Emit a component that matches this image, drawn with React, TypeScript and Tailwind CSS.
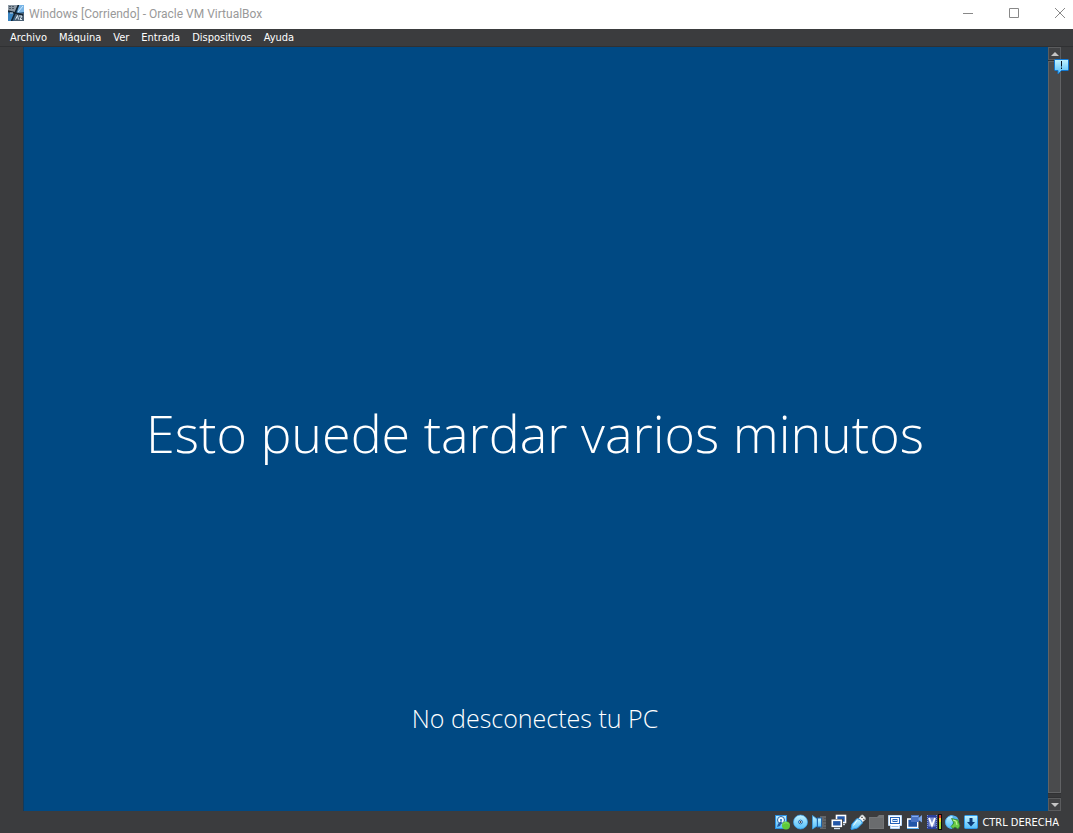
import type { ReactNode } from "react";

const menus = [
  { label: "Archivo" },
  { label: "Máquina" },
  { label: "Ver" },
  { label: "Entrada" },
  { label: "Dispositivos" },
  { label: "Ayuda" },
];

function Icon({ children }: { children: ReactNode }) {
  return (
    <svg viewBox="0 0 16 16" className="block size-4" aria-hidden="true">
      {children}
    </svg>
  );
}

function AppIcon() {
  return (
    <Icon>
      <rect width="16" height="16" fill="#275c8a" />
      <path d="M0 0h10L7 7 0 6z" fill="#8d9aa6" />
      <path d="M1 1.5h6M1 3.5h5" stroke="#4a5764" strokeDasharray="2 1" />
      <path d="M11 0h5v7l-7 1z" fill="#79b5e6" />
      <path d="M0 8l6 1-3 7H0z" fill="#3a84c0" />
      <path d="M7 9l9-1v8H6z" fill="#4b6074" />
      <path d="M10.5 0L3.5 16M0 6l15 4" stroke="#13222f" strokeWidth="1.5" />
      <path d="M7.5 14.5l2-4 1 4M11 11h3l-2 3.5h2" stroke="#d8e9f5" fill="none" />
      <path d="M15 1l-5 6M2 8l3 0" stroke="#cfeaff" />
    </Icon>
  );
}

function BlueGradient({ id }: { id: string }) {
  return (
    <linearGradient id={id} x1="0" y1="0" x2="0" y2="1">
      <stop offset="0" stopColor="#c4f3ff" />
      <stop offset="1" stopColor="#52bdfa" />
    </linearGradient>
  );
}

const devices = [
  {
    name: "Discos duros",
    icon: (
      <Icon>
        <defs><BlueGradient id="disk" /></defs>
        <rect x="1.5" y="1.5" width="11" height="13" fill="url(#disk)" stroke="#2b8fe2" />
        <circle cx="7" cy="6" r="3.5" fill="#f0fcff" stroke="#2a62a8" />
        <circle cx="7" cy="6" r="1" fill="#0867c5" />
        <path d="M3 13l1-3 3-3 1 1-2 4z" fill="#2558a0" />
        <circle cx="12" cy="11.5" r="4" fill="#5fc93a" />
        <path d="M9 10.5a3.4 3.4 0 016 0" fill="none" stroke="#86e05c" />
      </Icon>
    ),
  },
  {
    name: "Unidades ópticas",
    icon: (
      <Icon>
        <defs><BlueGradient id="disc" /></defs>
        <circle cx="7.5" cy="8" r="7" fill="url(#disc)" stroke="#3aa2f0" strokeWidth="0.7" />
        <circle cx="7.5" cy="8" r="1.9" fill="#fff" stroke="#1b6bb8" />
        <circle cx="7.5" cy="8" r="0.9" fill="#3b3c3e" />
      </Icon>
    ),
  },
  {
    name: "Audio",
    icon: (
      <Icon>
        <defs><BlueGradient id="audio" /></defs>
        <path d="M8 2h6v13H8z" fill="#636568" />
        <path d="M12 4.5h2M11 7.5h3M12 10.5h2M11 13.5h3" stroke="#515356" />
        <path d="M.5 1.5L5 5v7L.5 15z" fill="url(#audio)" stroke="#3b9fea" strokeWidth="0.8" />
        <rect x="5.5" y="4" width="4" height="9" fill="url(#audio)" stroke="#1f65ad" />
      </Icon>
    ),
  },
  {
    name: "Red",
    icon: (
      <Icon>
        <rect x="5.5" y="1.5" width="9" height="7" fill="#2357a8" stroke="#fff" strokeWidth="1.6" />
        <path d="M9 10.5h5" stroke="#c3d2e2" strokeWidth="1.4" />
        <rect x="0" y="5" width="12" height="10" fill="#3b3c3e" />
        <rect x="1.3" y="6.3" width="9" height="6" fill="#2357a8" stroke="#fff" strokeWidth="1.6" />
        <path d="M3 14.5h6" stroke="#d4e3f2" strokeWidth="1.4" />
      </Icon>
    ),
  },
  {
    name: "USB",
    icon: (
      <Icon>
        <defs><BlueGradient id="usb" /></defs>
        <path d="M8.5 4.5l3-3.5h1.5l2.5 3v1.5l-3 2.5z" fill="#f5f7f7" stroke="#a1a8ab" strokeWidth="0.7" />
        <path d="M11.4 3.4h1.2M13.4 5.4h1" stroke="#222" strokeWidth="1.2" />
        <path d="M7 4.5q4.500 .5 5.500 4.500l-5 5-6 1.500-.5-.5 1-5z" fill="url(#usb)" stroke="#2a98ec" />
        <path d="M3.500 11.500L7 6.500" stroke="#ecfdff" />
      </Icon>
    ),
  },
  {
    name: "Carpetas compartidas",
    icon: (
      <Icon>
        <path d="M0 3h8l2-2h5v14H0z" fill="#737577" />
        <path d="M1 4h13v10H1z" fill="#6a6c6e" />
      </Icon>
    ),
  },
  {
    name: "Pantalla",
    icon: (
      <Icon>
        <path d="M.5 1.5h13v10h-2v3h-9v-3h-2z" fill="#fff" stroke="#b9d8f8" />
        <rect x="2.500" y="3.500" width="9" height="6" fill="#fff" stroke="#2462b8" />
        <rect x="5" y="5.500" width="4" height="2" fill="#c5e4ff" stroke="#2462b8" />
        <path d="M3.500 12.500h7" stroke="#9cc4ee" />
      </Icon>
    ),
  },
  {
    name: "Grabación",
    icon: (
      <Icon>
        <path d="M.7 5h10v8.500h-10z" fill="#2357a8" stroke="#fff" strokeWidth="1.4" />
        <path d="M0 14.500h12" stroke="#62b7f5" />
        <rect x="4" y="1" width="8" height="7" fill="#4a74c4" />
        <path d="M11.500 4L15 1v7.500L11.500 6z" fill="#7ba4e4" />
        <path d="M5 2.500h6" stroke="#86aeea" />
      </Icon>
    ),
  },
  {
    name: "Virtualización",
    icon: (
      <Icon>
        <rect x="1" y="1" width="10" height="14" fill="#2a409c" />
        <path d="M1.500 1v14M10.500 1v14" stroke="#7d90d4" strokeDasharray="1 1" />
        <path d="M2.500 3.500h7v9h-7z" fill="#8494d2" />
        <path d="M3 4l3 7.500L9 4" stroke="#fff" strokeWidth="1.800" fill="none" />
        <rect x="12" y="0" width="4" height="16" fill="#0c0c0c" />
        <path d="M14 1v3" stroke="#e43b28" strokeWidth="2" />
        <path d="M14 4v4" stroke="#f4cf28" strokeWidth="2" />
        <path d="M14 8v7" stroke="#a2dc31" strokeWidth="2" />
      </Icon>
    ),
  },
  {
    name: "Integración del ratón",
    icon: (
      <Icon>
        <defs><BlueGradient id="mouse" /></defs>
        <path d="M6 1.500q3-.5 3 2.500L7 14.500Q.5 14 .5 8q0-5 5.500-6.500z" fill="url(#mouse)" stroke="#4aaaf0" />
        <path d="M8 1.500q5 0 6 6l-3 1-4-3z" fill="#55b4f2" />
        <path d="M6.500 4.500L13 6l2 6-2 3-3-2-2 1.500-2-2 3-3.500z" fill="#6bcb48" stroke="#2d8534" strokeWidth="0.800" />
        <path d="M8 6l3 1 1 4" fill="none" stroke="#c5f59c" />
      </Icon>
    ),
  },
  {
    name: "Captura de teclado",
    icon: (
      <Icon>
        <defs><BlueGradient id="key" /></defs>
        <rect x=".5" y="1.500" width="13" height="13" rx="1" fill="url(#key)" stroke="#2d9bed" />
        <path d="M5.500 4h3v4H11l-4 4.500L3 8h2.500z" fill="#0b3a78" />
      </Icon>
    ),
  },
];

export default function App() {
  return (
    <div className="flex min-h-screen flex-col bg-[#3b3c3e] font-['Open_Sans',sans-serif]">
      <header className="flex h-[29px] shrink-0 items-center bg-white pb-[3px] pl-2">
        <AppIcon />
        <h1 className="ml-[5px] pt-px font-['Roboto',sans-serif] text-[12px] leading-4 text-[#999]">
          Windows [Corriendo] - Oracle VM VirtualBox
        </h1>
        <div className="ml-auto flex gap-5 text-[#888]">
          <button aria-label="Minimizar" className="flex h-6 w-[26px] items-center justify-center">
            <svg viewBox="0 0 12 12" className="size-3" fill="none" stroke="currentColor"><path d="M1 6.5h10" /></svg>
          </button>
          <button aria-label="Maximizar" className="flex h-6 w-[26px] items-center justify-center">
            <svg viewBox="0 0 12 12" className="size-3" fill="none" stroke="currentColor"><path d="M1.5 1.5h9v9h-9z" /></svg>
          </button>
          <button aria-label="Cerrar" className="flex h-6 w-[26px] items-center justify-center">
            <svg viewBox="0 0 12 12" className="size-3" fill="none" stroke="currentColor"><path d="M1 1l10 10M11 1L1 11" /></svg>
          </button>
        </div>
      </header>

      <nav className="flex h-[18px] shrink-0 items-center gap-3 border-b border-[#303133] pt-px pl-[10px] font-['DejaVu_Sans_Condensed','Open_Sans',sans-serif] text-[11px] leading-4 text-white">
        {menus.map((m) => (
          <button key={m.label}>{m.label}</button>
        ))}
      </nav>

      <div className="flex flex-1">
        <main className="ml-[23px] grid flex-1 grid-rows-[1fr_auto_1fr] justify-items-center border-l border-[#123a5c] bg-[#004983] pr-[2px] font-light text-white">
          <p className="row-start-2 pt-2 text-[52px] leading-[76px]">Esto puede tardar varios minutos</p>
          <p className="row-start-3 self-end pb-[75px] text-[25px] leading-9">No desconectes tu PC</p>
        </main>
        <aside className="relative mr-3 flex w-[13px] flex-col gap-px bg-[#303133]">
          <button aria-label="Subir" className="flex h-[13px] items-center justify-center border border-[#5b5c5e] bg-[#414244]">
            <svg viewBox="0 0 8 4" className="h-1 w-2" fill="#c5c5c5"><path d="M4 0l4 4H0z" /></svg>
          </button>
          <div className="flex-1 border border-[#626365] bg-[#4a4b4d]" />
          <div className="h-[3px] bg-[#38393b]" />
          <button aria-label="Bajar" className="flex h-[13px] items-center justify-center border border-[#5b5c5e] bg-[#414244]">
            <svg viewBox="0 0 8 4" className="h-1 w-2" fill="#c5c5c5"><path d="M0 0h8L4 4z" /></svg>
          </button>
          <button aria-label="Notificaciones" className="absolute top-3 left-[6px]">
            <svg viewBox="0 0 16 16" className="block size-4">
              <defs><BlueGradient id="note" /></defs>
              <path d="M1 .5h13l.5.5v10l-.5.5H7.5L4 15v-3.5H1L.5 11V1z" fill="url(#note)" stroke="#1278d2" />
              <path d="M7.5 2v5.5M7.5 8.5v1.5" stroke="#061529" />
            </svg>
          </button>
        </aside>
      </div>

      <footer className="flex h-[22px] shrink-0 items-center justify-end gap-0.5 pr-[14px] text-white">
        <div className="flex gap-[3px]">
          {devices.map((d) => (
            <button key={d.name} aria-label={d.name}>{d.icon}</button>
          ))}
        </div>
        <span className="pt-px font-['DejaVu_Sans_Condensed','Open_Sans',sans-serif] text-[11px] leading-4">
          CTRL DERECHA
        </span>
      </footer>
    </div>
  );
}
